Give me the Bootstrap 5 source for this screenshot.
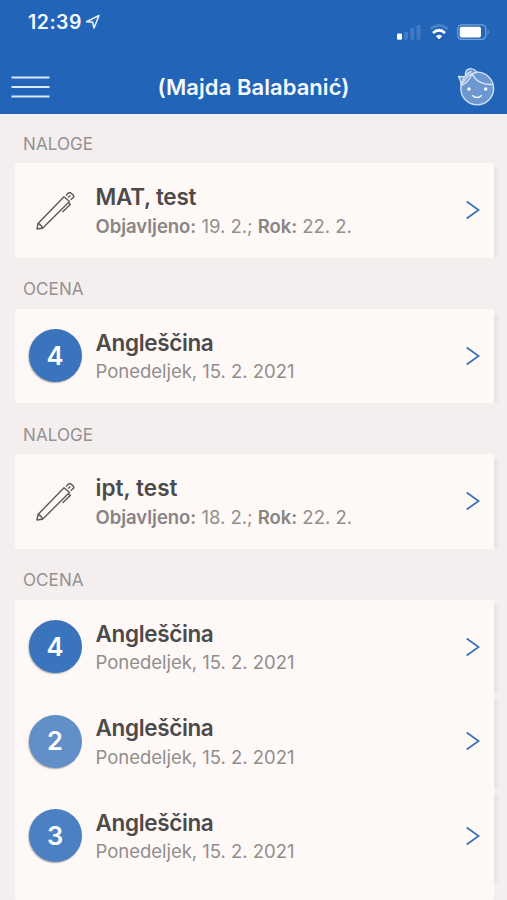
<!DOCTYPE html>
<html lang="sl">
<head>
<meta charset="utf-8">
<meta name="viewport" content="width=device-width, initial-scale=1">
<title>Majda Balabanić</title>
<link href="https://cdn.jsdelivr.net/npm/bootstrap@5.3.0/dist/css/bootstrap.min.css" rel="stylesheet">
<style>
body{font-family:Inter,"Liberation Sans",sans-serif;background:#f4efee}
.app-shell{height:900px;overflow:hidden}
.app-head{background:#2264b7;height:114px;flex:none;color:#f4f9ff}
.status{height:60px;padding:0 17px 0 28px}
.clock{font-size:19.5px;font-weight:600;line-height:24px;letter-spacing:.5px;margin-top:10px}
.clock svg{margin-left:3px}
.signals{margin-top:24px;gap:9px}
.bar{height:54px;padding:0 12px 0 11px}
.bar-title{font-size:22px;font-weight:600;line-height:28px;letter-spacing:.05px}
.sect{height:51px;flex:none;padding:20.5px 0 0 23px;font-size:17px;line-height:22px;letter-spacing:.1px;color:#949191}
.sect.first{height:49px;padding-top:18.5px}
.panel{margin:0 13px 0 14.5px;border-radius:2px;background:#fef8f7;flex:none}
.panel.rest{flex:1 1 0;min-height:0}
.entry{height:94.5px;padding:0 14px 0 14px;position:relative}
.entry::after{content:"";position:absolute;left:100%;top:5px;bottom:1px;width:5px;background:linear-gradient(90deg,#e9e4e3,#ede8e7 70%,#f2edec)}
.lead-icon{width:53px;height:53px;flex:none}
.grade{border-radius:50%;color:#fff;font-weight:600;font-size:25.5px;box-shadow:-.7px 1px 1.5px #0005}
.g4{background:#3974bd}.g2{background:#628fc8}.g3{background:#4b81c3}
.copy{margin-left:14px}
.name{font-size:22.5px;font-weight:600;line-height:28px;color:#4c4a4a;letter-spacing:-.35px}
.name.wide{letter-spacing:-.25px}
.name.roomy{letter-spacing:.05px}
.info{font-size:18.5px;line-height:24px;color:#918e8e;margin-top:2px;padding-top:.5px;letter-spacing:-.02px}
.info b{font-weight:600;color:#888585}
</style>
</head>
<body>
<div class="app-shell d-flex flex-column">
<header class="app-head">
  <div class="status d-flex justify-content-between align-items-start">
    <div class="clock d-flex align-items-center">12:39
      <svg width="15" height="16" viewBox="0 0 15 16" fill="none" stroke="#e4effc" stroke-width="1.6" stroke-linejoin="round"><path d="M1.5 7.7 14 1.5 9 14 7.6 8.1Z"/></svg>
    </div>
    <div class="signals d-flex align-items-start">
      <svg width="24" height="16" viewBox="0 0 24 16"><rect x="0" y="9.5" width="5" height="6.3" rx="1.3" fill="#fff"/><g fill="#4079c4"><rect x="7" y="7.5" width="4" height="8.3" rx="1"/><rect x="13.3" y="4" width="4" height="11.8" rx="1"/><rect x="19.6" y="1" width="4" height="14.8" rx="1"/></g></svg>
      <svg width="18" height="16" viewBox="0 0 18 16" fill="none" stroke-width="2.5"><path d="M.5 5Q9-2.3 17.5 5" stroke="#4b82c8"/><path d="M3 9Q9 3.6 15 9" stroke="#fff" stroke-width="2.8"/><path d="M6.3 12.2Q9 10.2 11.7 12.2L9 14.8Z" fill="#fff" stroke="#fff" stroke-width="1"/></svg>
      <svg width="33" height="17" viewBox="0 0 33 17"><rect x=".8" y=".8" width="28" height="14.6" rx="4" fill="none" stroke="#79a2d7" stroke-width="1.2"/><rect x="2.7" y="2.8" width="21.3" height="10.6" rx="2" fill="#fff"/><path d="M30.7 5.5Q33 8 30.7 10.5Z" fill="#79a2d7"/></svg>
    </div>
  </div>
  <nav class="bar d-flex align-items-center justify-content-between">
    <svg width="39" height="24" viewBox="0 0 39 24" stroke="#dceaff" stroke-width="2"><path d="M.5 2.5H38.5M.5 12H38.5M.5 21.5H38.5"/></svg>
    <div class="bar-title">(Majda Balabanić)</div>
    <svg width="38" height="40" viewBox="0 0 38 40" fill="#6c97cf" stroke="#cfe1f8" stroke-width="1.4" stroke-linecap="round" stroke-linejoin="round"><circle cx="20.2" cy="21.5" r="16.4"/><path d="M8.5 8C8 1 15-.5 20 5L13.5 7.5Q10 9 8 13L4 17.5 3.5 14 1.5 9.5 7 9.8"/><path d="M15 6.5Q12 15.5 4.2 18.5M15 6.5Q20 18 35.8 17.5M14 4.5Q7 8 5 16" fill="none"/><path d="M15.8 28.7Q20 32.5 24.3 28.7" fill="none" stroke="#fff"/><g fill="#fff" stroke="none"><circle cx="12" cy="22" r="1.7"/><circle cx="28.7" cy="22" r="1.7"/></g></svg>
  </nav>
</header>

<main class="d-flex flex-column flex-grow-1">
  <div class="sect first">NALOGE</div>
  <div class="panel">
    <div class="entry d-flex align-items-center">
      <svg class="lead-icon" viewBox="0 0 53 53" fill="none" stroke="#5d5a5a" stroke-width="1.4" stroke-linejoin="round"><path d="M8 45 9 39.5 35 12.7 40.5 17.5 13.5 44.3ZM9 39.5Q12.5 40.5 13.5 44.3M37 11.5 40 8.5Q43.5 9 45 12.8L41.7 15.8M39 13.5 41.5 11.5M39.5 18.5 41.3 20.5 33.5 28"/></svg>
      <div class="copy flex-grow-1"><div class="name wide">MAT, test</div><div class="info"><b>Objavljeno:</b> 19. 2.; <b>Rok:</b> 22. 2.</div></div>
      <svg width="14" height="20" viewBox="0 0 14 20" fill="none" stroke="#3672b9" stroke-width="1.8"><path d="M.7 1.5 12.6 10 .7 18.5"/></svg>
    </div>
  </div>

  <div class="sect">OCENA</div>
  <div class="panel">
    <div class="entry d-flex align-items-center">
      <div class="lead-icon grade g4 d-flex align-items-center justify-content-center">4</div>
      <div class="copy flex-grow-1"><div class="name">Angleščina</div><div class="info">Ponedeljek, 15. 2. 2021</div></div>
      <svg width="14" height="20" viewBox="0 0 14 20" fill="none" stroke="#3672b9" stroke-width="1.8"><path d="M.7 1.5 12.6 10 .7 18.5"/></svg>
    </div>
  </div>

  <div class="sect">NALOGE</div>
  <div class="panel">
    <div class="entry d-flex align-items-center">
      <svg class="lead-icon" viewBox="0 0 53 53" fill="none" stroke="#5d5a5a" stroke-width="1.4" stroke-linejoin="round"><path d="M8 45 9 39.5 35 12.7 40.5 17.5 13.5 44.3ZM9 39.5Q12.5 40.5 13.5 44.3M37 11.5 40 8.5Q43.5 9 45 12.8L41.7 15.8M39 13.5 41.5 11.5M39.5 18.5 41.3 20.5 33.5 28"/></svg>
      <div class="copy flex-grow-1"><div class="name roomy">ipt, test</div><div class="info"><b>Objavljeno:</b> 18. 2.; <b>Rok:</b> 22. 2.</div></div>
      <svg width="14" height="20" viewBox="0 0 14 20" fill="none" stroke="#3672b9" stroke-width="1.8"><path d="M.7 1.5 12.6 10 .7 18.5"/></svg>
    </div>
  </div>

  <div class="sect">OCENA</div>
  <div class="panel rest">
    <div class="entry d-flex align-items-center">
      <div class="lead-icon grade g4 d-flex align-items-center justify-content-center">4</div>
      <div class="copy flex-grow-1"><div class="name">Angleščina</div><div class="info">Ponedeljek, 15. 2. 2021</div></div>
      <svg width="14" height="20" viewBox="0 0 14 20" fill="none" stroke="#3672b9" stroke-width="1.8"><path d="M.7 1.5 12.6 10 .7 18.5"/></svg>
    </div>
    <div class="entry d-flex align-items-center">
      <div class="lead-icon grade g2 d-flex align-items-center justify-content-center">2</div>
      <div class="copy flex-grow-1"><div class="name">Angleščina</div><div class="info">Ponedeljek, 15. 2. 2021</div></div>
      <svg width="14" height="20" viewBox="0 0 14 20" fill="none" stroke="#3672b9" stroke-width="1.8"><path d="M.7 1.5 12.6 10 .7 18.5"/></svg>
    </div>
    <div class="entry d-flex align-items-center">
      <div class="lead-icon grade g3 d-flex align-items-center justify-content-center">3</div>
      <div class="copy flex-grow-1"><div class="name">Angleščina</div><div class="info">Ponedeljek, 15. 2. 2021</div></div>
      <svg width="14" height="20" viewBox="0 0 14 20" fill="none" stroke="#3672b9" stroke-width="1.8"><path d="M.7 1.5 12.6 10 .7 18.5"/></svg>
    </div>
  </div>
</main>
</div>
<script src="https://cdn.jsdelivr.net/npm/bootstrap@5.3.0/dist/js/bootstrap.bundle.min.js"></script>
</body>
</html>
